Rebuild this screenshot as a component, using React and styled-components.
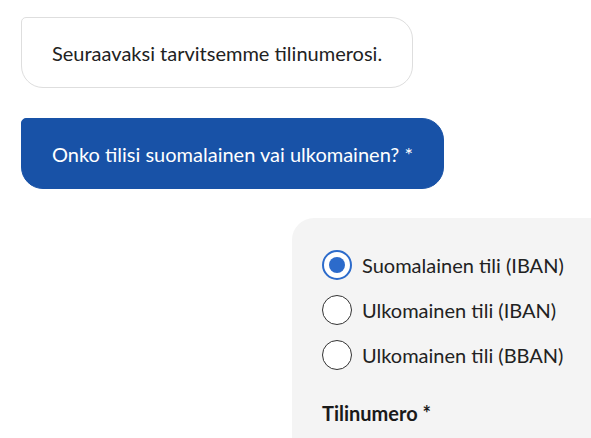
import React, { useState } from 'react';
import styled, { createGlobalStyle } from 'styled-components';

const GlobalStyle = createGlobalStyle`
  html, body {
    margin: 0;
    padding: 0;
    background: #ffffff;
    overflow: hidden;
  }
  body {
    font-family: Lato, "Noto Sans", sans-serif;
    color: #222222;
  }
`

const Page = styled.div`
  display: flex;
  flex-direction: column;
  align-items: flex-start;
  padding: 17px 0 0 21px;
`

const Bubble = styled.div`
  box-sizing: border-box;
  height: 71px;
  display: flex;
  align-items: center;
  padding: 0 30px;
  font-size: 20px;
  line-height: 24px;
  border-radius: 5px 22px 22px 22px;
  background: ${props => props.primary ? '#1852a7' : '#ffffff'};
  color: ${props => props.primary ? '#ffffff' : '#222222'};
  border: 1px solid ${props => props.primary ? '#1852a7' : '#dedede'};
  margin-bottom: 30px;
`

const Panel = styled.div`
  box-sizing: border-box;
  align-self: stretch;
  margin-left: 271px;
  margin-top: -1px;
  padding: 32px 30px 30px 30px;
  background: #f4f4f4;
  border-radius: 22px 0 0 0;
`

const Options = styled.div`
  display: flex;
  flex-direction: column;
  gap: 15px;
`

const Option = styled.label`
  display: flex;
  align-items: center;
  gap: 10px;
  font-size: 20px;
  line-height: 30px;
  white-space: nowrap;
  cursor: pointer;
`

const Radio = styled.span`
  box-sizing: border-box;
  width: 30px;
  height: 30px;
  border-radius: 50%;
  flex: none;
  display: flex;
  align-items: center;
  justify-content: center;
  background: #ffffff;
  border: ${props => props.checked ? '2px solid #2c6bcb' : '1px solid #333333'};

  &::after {
    content: '';
    width: 16px;
    height: 16px;
    border-radius: 50%;
    background: ${props => props.checked ? '#2c6bcb' : 'transparent'};
  }
`

const FieldLabel = styled.div`
  margin-top: 31px;
  font-size: 20px;
  font-weight: 700;
  line-height: 24px;
  color: #1a1a1a;
`

const options = [
  'Suomalainen tili (IBAN)',
  'Ulkomainen tili (IBAN)',
  'Ulkomainen tili (BBAN)',
];

export default function App() {
  const [selected, setSelected] = useState(0);

  return (
    <>
      <GlobalStyle />
      <Page>
        <Bubble>Seuraavaksi tarvitsemme tilinumerosi.</Bubble>
        <Bubble primary>Onko tilisi suomalainen vai ulkomainen? *</Bubble>
        <Panel>
          <Options>
            {options.map((opt, i) => (
              <Option key={i} onClick={() => setSelected(i)}>
                <Radio checked={selected === i} />
                {opt}
              </Option>
            ))}
          </Options>
          <FieldLabel>Tilinumero *</FieldLabel>
        </Panel>
      </Page>
    </>
  );
}
